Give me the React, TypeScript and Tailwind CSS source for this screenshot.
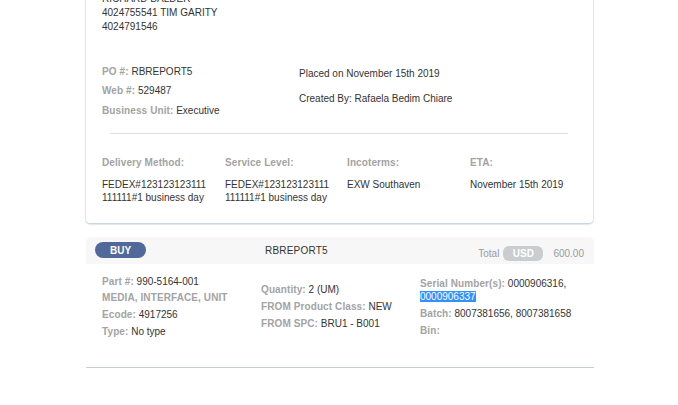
import React from "react";

const L = ({ children }: { children: React.ReactNode }) => (
  <span className="font-bold text-[#a3a3a3] tracking-[0.1px]">{children}</span>
);

export default function App() {
  return (
    <div className="w-[678px] h-[405px] overflow-hidden bg-white text-[10px] text-[#333] font-['Liberation_Sans',Arial,sans-serif]">
      <div className="ml-[85px] w-[509px]">
        <div className="-mt-[30px] pt-[21px] pb-[19px] pl-[16px] bg-white border border-[#e4e6e8] border-b-[#c9d5e1] rounded-[5px] shadow-[0_1px_1px_rgba(170,190,210,0.35)]">
          <div className="leading-[14px]">
            <div>RICHARD BALDER</div>
            <div>4024755541 TIM GARITY</div>
            <div>4024791546</div>
          </div>
          <div className="mt-[28px] flex items-start">
            <div className="w-[197px] leading-[19.5px]">
              <div><L>PO #:</L> RBREPORT5</div>
              <div className="-mt-[0.5px]"><L>Web #:</L> 529487</div>
              <div><L>Business Unit:</L> Executive</div>
            </div>
            <div className="-mt-[1px] leading-[25px]">
              <div>Placed on November 15th 2019</div>
              <div>Created By: Rafaela Bedim Chiare</div>
            </div>
          </div>
          <div className="mt-[13px] ml-[8px] mr-[25px] h-px bg-[#dde1e4]" />
          <div className="mt-[22px] flex">
            {[
              ["Delivery Method:", ["FEDEX#123123123111", "111111#1 business day"]],
              ["Service Level:", ["FEDEX#123123123111", "111111#1 business day"]],
              ["Incoterms:", ["EXW Southaven"]],
              ["ETA:", ["November 15th 2019"]],
            ].map(([label, vals], i) => (
              <div key={i} className={i === 1 ? "w-[122px]" : "w-[123px]"}>
                <div className="leading-[14px]"><L>{label as string}</L></div>
                <div className="mt-[7.5px] leading-[13px]">
                  {(vals as string[]).map((v) => (
                    <div key={v}>{v}</div>
                  ))}
                </div>
              </div>
            ))}
          </div>
        </div>

        <div className="mt-[13px] ml-[1px]">
          <div className="h-[27px] bg-[#f7f7f7] rounded-t-[5px] flex items-center pl-[9px] pr-[10px]">
            <div className="w-[51px] h-[16px] rounded-full bg-[#50699a] text-white font-bold flex items-center justify-center">
              BUY
            </div>
            <div className="ml-[119px] tracking-[0.2px]">RBREPORT5</div>
            <div className="ml-auto flex items-center text-[#9a9a9a] mt-[6px]">
              <span>Total</span>
              <span className="ml-[4px] w-[40px] h-[15px] rounded-[6px] bg-[#c9cdd0] text-white font-bold flex items-center justify-center">USD</span>
              <span className="ml-[10px]">600.00</span>
            </div>
          </div>
          <div className="h-[104px] border-b border-[#c6cdcd] flex pl-[16px] leading-[13px]">
            <div className="w-[159px] pt-[11px] space-y-[3.7px]">
              <div><L>Part #:</L> 990-5164-001</div>
              <div><L>MEDIA, INTERFACE, UNIT</L></div>
              <div><L>Ecode:</L> 4917256</div>
              <div><L>Type:</L> No type</div>
            </div>
            <div className="w-[159px] pt-[19px] space-y-[4px]">
              <div><L>Quantity:</L> 2 (UM)</div>
              <div><L>FROM Product Class:</L> NEW</div>
              <div><L>FROM SPC:</L> BRU1 - B001</div>
            </div>
            <div className="pt-[13px] space-y-[4px]">
              <div>
                <div><L>Serial Number(s):</L> 0000906316,</div>
                <div><span className="bg-[#3390ff] text-white">0000906337</span></div>
              </div>
              <div><L>Batch:</L> 8007381656, 8007381658</div>
              <div><L>Bin:</L></div>
            </div>
          </div>
        </div>
      </div>
    </div>
  );
}
